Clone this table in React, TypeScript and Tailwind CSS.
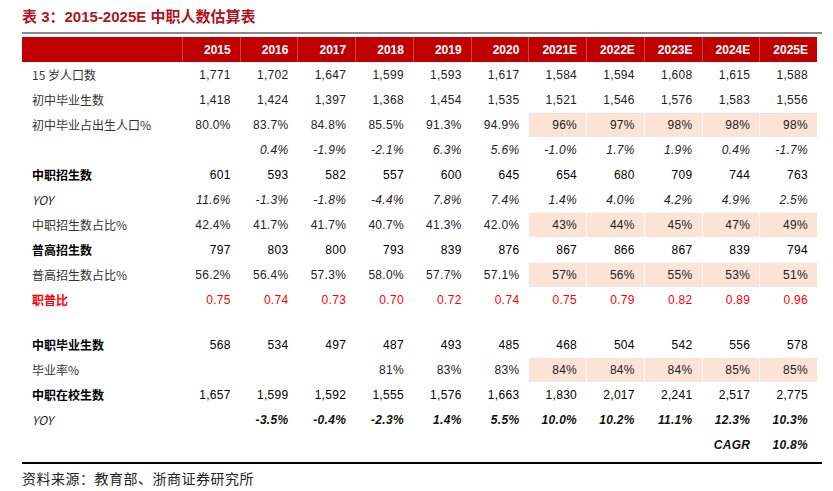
const years = ['2015', '2016', '2017', '2018', '2019', '2020', '2021E', '2022E', '2023E', '2024E', '2025E']

type Row = {
  label: string
  values: string[]
  kind?: 'bold' | 'italic' | 'red' | 'italicBold'
  shaded?: boolean
}

const rowsTop: Row[] = [
  { label: '15 岁人口数', values: ['1,771', '1,702', '1,647', '1,599', '1,593', '1,617', '1,584', '1,594', '1,608', '1,615', '1,588'] },
  { label: '初中毕业生数', values: ['1,418', '1,424', '1,397', '1,368', '1,454', '1,535', '1,521', '1,546', '1,576', '1,583', '1,556'] },
  { label: '初中毕业占出生人口%', values: ['80.0%', '83.7%', '84.8%', '85.5%', '91.3%', '94.9%', '96%', '97%', '98%', '98%', '98%'], shaded: true },
  { label: '', values: ['', '0.4%', '-1.9%', '-2.1%', '6.3%', '5.6%', '-1.0%', '1.7%', '1.9%', '0.4%', '-1.7%'], kind: 'italic' },
  { label: '中职招生数', values: ['601', '593', '582', '557', '600', '645', '654', '680', '709', '744', '763'], kind: 'bold' },
  { label: 'YOY', values: ['11.6%', '-1.3%', '-1.8%', '-4.4%', '7.8%', '7.4%', '1.4%', '4.0%', '4.2%', '4.9%', '2.5%'], kind: 'italic' },
  { label: '中职招生数占比%', values: ['42.4%', '41.7%', '41.7%', '40.7%', '41.3%', '42.0%', '43%', '44%', '45%', '47%', '49%'], shaded: true },
  { label: '普高招生数', values: ['797', '803', '800', '793', '839', '876', '867', '866', '867', '839', '794'], kind: 'bold' },
  { label: '普高招生数占比%', values: ['56.2%', '56.4%', '57.3%', '58.0%', '57.7%', '57.1%', '57%', '56%', '55%', '53%', '51%'], shaded: true },
  { label: '职普比', values: ['0.75', '0.74', '0.73', '0.70', '0.72', '0.74', '0.75', '0.79', '0.82', '0.89', '0.96'], kind: 'red' },
]

const rowsBottom: Row[] = [
  { label: '中职毕业生数', values: ['568', '534', '497', '487', '493', '485', '468', '504', '542', '556', '578'], kind: 'bold' },
  { label: '毕业率%', values: ['', '', '', '81%', '83%', '83%', '84%', '84%', '84%', '85%', '85%'], shaded: true },
  { label: '中职在校生数', values: ['1,657', '1,599', '1,592', '1,555', '1,576', '1,663', '1,830', '2,017', '2,241', '2,517', '2,775'], kind: 'bold' },
  { label: 'YOY', values: ['', '-3.5%', '-0.4%', '-2.3%', '1.4%', '5.5%', '10.0%', '10.2%', '11.1%', '12.3%', '10.3%'], kind: 'italicBold' },
  { label: '', values: ['', '', '', '', '', '', '', '', '', 'CAGR', '10.8%'], kind: 'italicBold' },
]

const cjk = "font-['Noto_Sans_CJK_SC',sans-serif]"
const num = "font-['Liberation_Sans','Noto_Sans_CJK_SC',sans-serif]"

function labelClass(kind?: Row['kind']) {
  if (kind === 'bold') return 'font-bold text-black'
  if (kind === 'red') return 'font-bold text-[#ff0000]'
  if (kind === 'italic' || kind === 'italicBold') return `italic text-[#222] ${num}`
  return 'text-[#333]'
}

function valueClass(kind?: Row['kind']) {
  if (kind === 'italic') return 'italic text-[#222]'
  if (kind === 'italicBold') return 'italic font-bold text-[#111]'
  if (kind === 'red') return 'text-[#ff0000]'
  if (kind === 'bold') return 'text-black'
  return 'text-[#222]'
}

function TableRow({ row }: { row: Row }) {
  return (
    <div className="grid grid-cols-[160px_repeat(11,1fr)] h-[25px]">
      <div className={`flex items-center pl-[10px] text-[12px] ${cjk} ${labelClass(row.kind)}`}>
        {row.label}
      </div>
      {row.values.map((v, i) => {
        const shade = row.shaded && i >= 6
        return (
          <div
            key={i}
            className={`flex items-center justify-end pr-[9px] text-[12px] tracking-[0.3px] ${num} ${valueClass(row.kind)} ${
              shade ? 'bg-[#fbe4d6] border-l border-t border-white/70' : ''
            }`}
          >
            {v}
          </div>
        )
      })}
    </div>
  )
}

export default function App() {
  return (
    <div className="w-[833px] h-[491px] bg-white overflow-hidden pl-[22px] pt-[7px]">
      <div className={`h-[20px] leading-[20px] text-[15px] font-bold text-[#b0141e] font-['Liberation_Sans','Noto_Sans_CJK_SC',sans-serif]`}>
        表 3：2015-2025E 中职人数估算表
      </div>
      <div className="w-[800px] h-[2px] bg-[#8a8a8a] mt-[5px]" />
      <div className="w-[795px] mt-[3px]">
        <div className="grid grid-cols-[160px_repeat(11,1fr)] h-[25px] bg-[#c00000]">
          <div />
          {years.map((y) => (
            <div
              key={y}
              className={`flex items-center justify-end pr-[9px] border-l border-white/25 text-white font-bold text-[12px] ${num}`}
            >
              {y}
            </div>
          ))}
        </div>
        {rowsTop.map((r, i) => (
          <TableRow key={i} row={r} />
        ))}
        <div className="h-[20px]" />
        {rowsBottom.map((r, i) => (
          <TableRow key={i} row={r} />
        ))}
      </div>
      <div className="w-[800px] h-[1.5px] bg-black mt-[5px]" />
      <div className={`mt-[4px] h-[20px] leading-[20px] text-[14px] text-[#222] tracking-[0.5px] ${cjk}`}>
        资料来源：教育部、浙商证券研究所
      </div>
    </div>
  )
}
